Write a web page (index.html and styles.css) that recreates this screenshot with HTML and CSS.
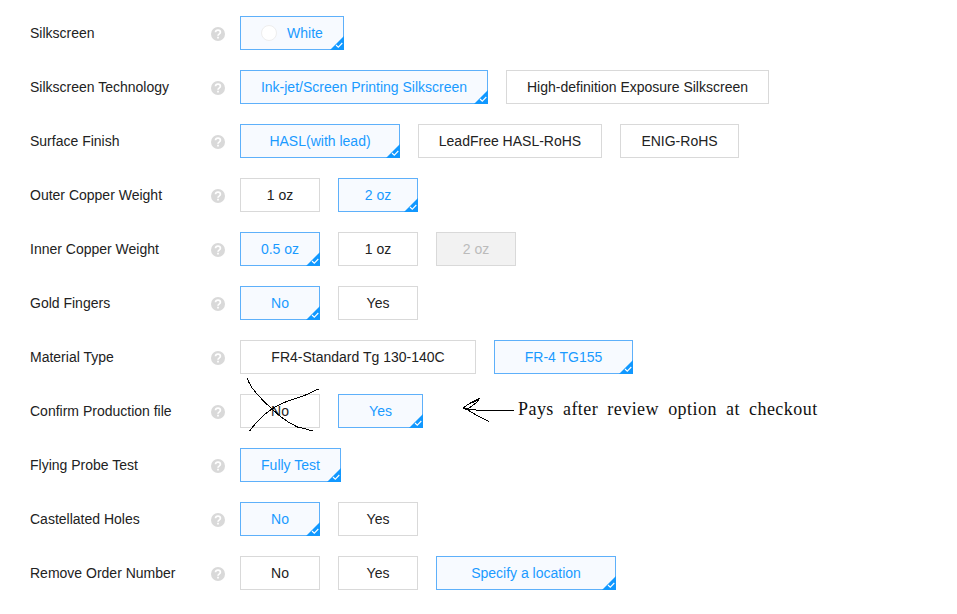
FILE: index.html
```
<!DOCTYPE html>
<html lang="en">
<head>
<meta charset="utf-8">
<title>PCB Options</title>
<link rel="stylesheet" href="styles.css">
</head>
<body>
<main class="form" id="form"></main>
<svg class="cross" width="76" height="56" viewBox="0 0 76 56"><path d="M1.5 0.5L3 4.5L6.5 10.5L11.5 16.5L18 23.5L26.5 31.5L34.5 38.5L43 44.5L51.5 49L58 50.5L67 53M3.5 53L9.5 45.5L18 37L26.5 30.5L33 27L39.5 24L49.5 20.5L59.5 17L68 13L72.5 11"/></svg>
<div class="note"><svg width="54" height="26" viewBox="0 0 54 26"><path d="M17.5 1.5L10 5L1.5 10.5L6 12L18 13.5H51.5M17.5 1.5L14.5 5.5L5 12.5M5 12.5L15 18.5L20 21L27 24.5"/><path d="M1.5 11.5L7 13M17 2.5L10 6"/></svg><span>Pays after review option at checkout</span></div>
<script src="form.js"></script>
</body>
</html>
```
FILE: styles.css
```
body {
  margin: 0;
  background: #fff;
  color: #222;
  font: 14px/20px "Liberation Sans", Arial, sans-serif;
}
.form {
  display: flex;
  flex-direction: column;
  gap: 20px;
  padding: 16px 30px 0;
}
.row {
  display: flex;
  align-items: center;
  height: 34px;
}
.label { width: 181px; }
.help { width: 14px; height: 14px; margin-right: 15px; margin-top: 2px; }
.options { display: flex; gap: 18px; }
.option {
  position: relative;
  box-sizing: border-box;
  display: flex;
  align-items: center;
  justify-content: center;
  height: 34px;
  border: 1px solid #d9d9d9;
}
.selected { color: #1a9aff; border-color: #5eb0fa; background: #f7faff; }
.disabled { color: #bbb; background: #f2f2f2; }
.tick { position: absolute; right: -1px; bottom: -1px; }
.swatch { width: 14px; height: 14px; border: 1px solid #eee; border-radius: 50%; background: #fff; margin-right: 10px; }
.cross { position: absolute; left: 246px; top: 378px; fill: none; stroke: #000; shape-rendering: crispEdges; }
.note {
  position: absolute;
  left: 462px;
  top: 397px;
  display: flex;
  align-items: center;
  font: 18px/24px "Liberation Serif", serif;
  letter-spacing: 0.45px;
  word-spacing: 4.2px;
  color: #111;
  white-space: nowrap;
}
.note span { margin: -3px 0 0 2px; }
.note svg { fill: none; stroke: #000; shape-rendering: crispEdges; }
```
FILE: form.js
```
const rows = [
  ["Silkscreen", [["White", 104, "selected"]]],
  ["Silkscreen Technology", [["Ink-jet/Screen Printing Silkscreen", 248, "selected"], ["High-definition Exposure Silkscreen", 263]]],
  ["Surface Finish", [["HASL(with lead)", 160, "selected"], ["LeadFree HASL-RoHS", 184], ["ENIG-RoHS", 119]]],
  ["Outer Copper Weight", [["1 oz", 80], ["2 oz", 80, "selected"]]],
  ["Inner Copper Weight", [["0.5 oz", 80, "selected"], ["1 oz", 80], ["2 oz", 80, "disabled"]]],
  ["Gold Fingers", [["No", 80, "selected"], ["Yes", 80]]],
  ["Material Type", [["FR4-Standard Tg 130-140C", 236], ["FR-4 TG155", 139, "selected"]]],
  ["Confirm Production file", [["No", 80], ["Yes", 85, "selected"]]],
  ["Flying Probe Test", [["Fully Test", 101, "selected"]]],
  ["Castellated Holes", [["No", 80, "selected"], ["Yes", 80]]],
  ["Remove Order Number", [["No", 80], ["Yes", 80], ["Specify a location", 180, "selected"]]]
];
const help = '<svg class="help" viewBox="0 0 14 14"><circle cx="7" cy="7" r="7" fill="#d9d9d9"/><path d="M4.5 5.3Q4.6 3.1 7 3.1T9.4 5.2Q9.4 6.2 8.3 6.9Q7 7.6 7 8.8M7 9.8V11.5" fill="none" stroke="#fff" stroke-width="1.7"/></svg>';
const tick = '<svg class="tick" width="14" height="14" viewBox="0 0 14 14"><path d="M14 0V14H0Z" fill="#1198ff"/><path d="M6 9L8.3 11.2L12.3 7" fill="none" stroke="#fff" stroke-width="1.1"/></svg>';
document.getElementById("form").innerHTML = rows.map(([label, options]) =>
  `<div class="row"><span class="label">${label}</span>${help}<div class="options">${options.map(([text, width, state = ""]) =>
    `<div class="option ${state}" style="width:${width}px">${text === "White" ? '<i class="swatch"></i>' : ""}<span>${text}</span>${state === "selected" ? tick : ""}</div>`).join("")}</div></div>`).join("");
```
